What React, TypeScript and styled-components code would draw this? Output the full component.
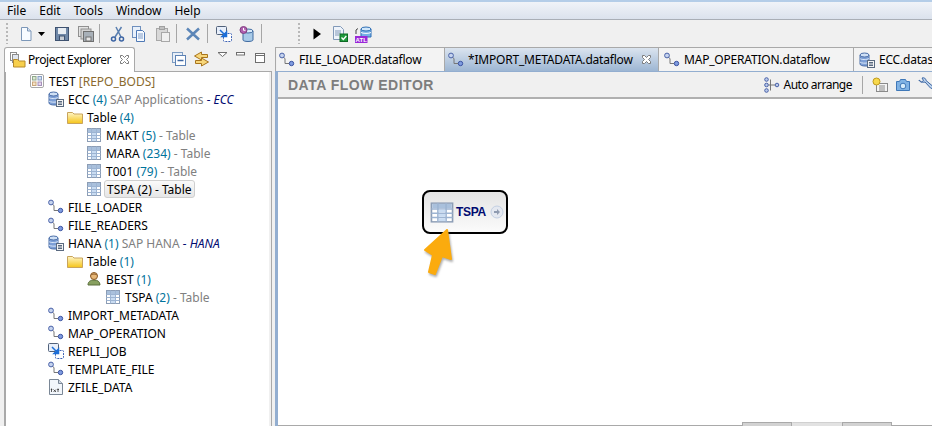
import React from "react";
import styled, { createGlobalStyle } from "styled-components";

const Global = createGlobalStyle`
  html, body { margin: 0; padding: 0; overflow: hidden; }
  body { background: #f0f0f0; font-family: "Noto Sans", "Liberation Sans", sans-serif; font-size: 12px; color: #000; }
  * { box-sizing: border-box; }
`;

const Shell = styled.div`
  width: 932px;
  height: 426px;
  display: flex;
  flex-direction: column;
  overflow: hidden;
  background: #f0f0f0;
  border-top: 2px solid #b4cde8;
`;

const MenuBar = styled.div`
  height: 18px;
  flex: none;
  display: flex;
  align-items: center;
  gap: 13px;
  padding: 1px 7px 0;
  background: linear-gradient(#f0f3f8, #dbe2ed);
  border-bottom: 1px solid #a9aeb6;
`;

const MenuItem = styled.span`
  font-size: 12px;
  line-height: 16px;
`;

const Toolbar = styled.div`
  height: 27px;
  flex: none;
  display: flex;
  align-items: center;
  padding-left: 6px;
`;

const Grip = styled.span`
  width: 2px;
  height: 21px;
  margin: 0 10px 0 0;
  background: repeating-linear-gradient(#b8b8b8 0 2px, transparent 2px 4px);
`;

const ToolIcon = styled.span<{ $w?: number; $after?: number }>`
  width: ${({ $w }) => $w ?? 16}px;
  height: 16px;
  margin-right: ${({ $after }) => $after ?? 6}px;
  display: inline-flex;
  flex: none;
`;

const ToolSep = styled.span<{ $after?: number }>`
  width: 1px;
  height: 19px;
  background: #a6a6a6;
  margin: 0 ${({ $after }) => $after ?? 9}px 0 1px;
`;

const Views = styled.div`
  flex: 1;
  min-height: 0;
  display: flex;
  padding-left: 4px;
`;

const Explorer = styled.section`
  width: 268px;
  flex: none;
  display: flex;
  flex-direction: column;
`;

const ExplorerHead = styled.div`
  height: 25px;
  flex: none;
  display: flex;
  align-items: flex-end;
  border-bottom: 1px solid #a9a9a9;
  position: relative;
`;

const ViewTab = styled.div`
  width: 131px;
  height: 25px;
  margin-bottom: -1px;
  display: flex;
  align-items: center;
  gap: 2px;
  padding: 0 6px 1px 5px;
  background: #fff;
  border: 1px solid #a9a9a9;
  border-bottom: none;
  border-radius: 3px 3px 0 0;
  position: relative;
  z-index: 1;
`;

const ViewLabel = styled.span`
  font-size: 12px;
  letter-spacing: -0.4px;
  margin-right: 6px;
  white-space: nowrap;
`;

const TabLabel = styled.span`
  font-size: 12px;
  letter-spacing: -0.2px;
  white-space: nowrap;
`;

const ViewTools = styled.div`
  flex: 1;
  height: 24px;
  display: flex;
  align-items: center;
  padding-left: 37px;
  gap: 7px;
`;

const TreePanel = styled.div`
  flex: 1;
  min-height: 0;
  border-left: 2px solid #a9a9a9;
  border-right: 1px solid #a9a9a9;
  background: #fff;
  box-shadow: inset -2px 0 #f0f0f0;
`;

const Row = styled.div<{ $depth: number }>`
  height: 18px;
  display: flex;
  align-items: center;
  gap: 4px;
  padding-left: ${({ $depth }) => 23 + $depth * 19}px;
  white-space: nowrap;
`;

const RowText = styled.span<{ $selected?: boolean }>`
  display: flex;
  align-items: center;
  gap: 4px;
  height: 18px;
  font-size: 12px;
  ${({ $selected }) =>
    $selected &&
    `background: linear-gradient(#fafafa, #e6e6e6);
     border: 1px solid #cfcfcf;
     border-radius: 3px;
     margin-left: -2px;
     padding: 0 2px 0 2px;`}
`;

const Label = styled.span`
  white-space: pre;
`;

const Count = styled.span<{ $plain?: boolean }>`
  color: ${({ $plain }) => ($plain ? "#000" : "#00739c")};
  white-space: pre;
`;

const Decor = styled.span<{ $plain?: boolean; $tan?: boolean }>`
  color: ${({ $plain, $tan }) => ($plain ? "#000" : $tan ? "#8a6a2e" : "#808080")};
  white-space: pre;
`;

const Alias = styled.span`
  color: #000a70;
  font-style: italic;
  white-space: pre;
`;

const EditorArea = styled.section`
  flex: 1;
  min-width: 0;
  margin-left: 3px;
  display: flex;
  flex-direction: column;
`;

const EditorTabs = styled.div`
  height: 24px;
  flex: none;
  display: flex;
  overflow: hidden;
  padding-left: 1px;
  border-top: 1px solid #a9a9a9;
  border-left: 1px solid #a9a9a9;
`;

const EditorTab = styled.div<{ $active?: boolean; $w: number; $pad: number }>`
  width: ${({ $w }) => $w}px;
  flex: none;
  display: flex;
  align-items: center;
  gap: 4px;
  padding: 0 6px 0 ${({ $pad }) => $pad}px;
  border-right: 1px solid #a9a9a9;
  background: ${({ $active }) => ($active ? "linear-gradient(#dbe4ef, #9db6d3)" : "#f3f3f3")};
`;

const TabClose = styled.span`
  display: flex;
  margin-left: auto;
`;

const EditorBody = styled.div`
  flex: 1;
  min-height: 0;
  display: flex;
  flex-direction: column;
  border-left: 3px solid #93aed0;
  border-top: 1px solid #93aed0;
`;

const EditorHeader = styled.div`
  height: 27px;
  flex: none;
  display: flex;
  align-items: center;
  padding-left: 10px;
  background: #f0f0f0;
  border-bottom: 2px solid #b0b0b0;
`;

const EditorTitle = styled.h1`
  flex: 1;
  margin: 0;
  font-family: "Liberation Sans", Arial, sans-serif;
  font-size: 14px;
  font-weight: 700;
  color: #7d7d7d;
  letter-spacing: 0.5px;
`;

const HeaderAction = styled.div`
  display: flex;
  align-items: center;
  gap: 4px;
  padding-right: 10px;
  border-right: 1px solid #a6a6a6;
  height: 18px;
  font-size: 12px;
  letter-spacing: -0.5px;
  white-space: nowrap;
`;

const HeaderIcons = styled.div`
  display: flex;
  align-items: center;
  gap: 7px;
  padding-left: 9px;
  margin-right: -2px;
`;

const Canvas = styled.div`
  flex: 1;
  min-height: 0;
  background: #fff;
  position: relative;
`;

const Node = styled.div`
  position: absolute;
  left: 144px;
  top: 91px;
  width: 86px;
  height: 44px;
  display: flex;
  align-items: center;
  gap: 1px;
  padding-left: 5px;
  border: 2px solid #000;
  border-radius: 8px;
  background: linear-gradient(#e4e4e4, #fbfbfb);
`;

const NodeName = styled.span`
  font-family: "Liberation Sans", Arial, sans-serif;
  font-size: 12px;
  font-weight: 700;
  letter-spacing: -0.3px;
  color: #000a70;
  margin-right: 3px;
`;

const Arrow = styled.svg`
  position: absolute;
  left: 142px;
  top: 126px;
  filter: drop-shadow(1px 2px 1px rgba(90, 90, 90, 0.5));
`;

const PaletteStrip = styled.div`
  position: absolute;
  left: 0;
  right: 0;
  bottom: 0;
  height: 4px;
  display: flex;
  justify-content: flex-end;
  padding-right: 40px;
  border-bottom: 1px solid #a9a9a9;
`;

const PaletteTab = styled.span<{ $active?: boolean }>`
  width: 50px;
  height: 4px;
  background: ${({ $active }) => ($active ? "#e2e2e2" : "#d2d2d2")};
  border-top: 1px solid ${({ $active }) => ($active ? "#d0d0d0" : "#a9a9a9")};
  border-left: 1px solid ${({ $active }) => ($active ? "transparent" : "#a9a9a9")};
  border-right: 1px solid ${({ $active }) => ($active ? "transparent" : "#a9a9a9")};
`;

/* icons */

const FlowIcon = () => (
  <svg width="16" height="16" viewBox="0 0 16 16" style={{ flex: "none" }}>
    <path d="M4 5l2 1.500v5h4" fill="none" stroke="#777" />
    <circle cx="3" cy="3.500" r="2.400" fill="#c5d3ee" stroke="#4a62a8" />
    <circle cx="12.500" cy="11.500" r="2.200" fill="#7f9ce0" stroke="#3a52a0" />
  </svg>
);

const TableIcon = ({ w = 16, h = 16 }: { w?: number; h?: number }) => (
  <svg width={w} height={h} viewBox="0 0 16 16" preserveAspectRatio="none" style={{ flex: "none" }}>
    <rect x="1.500" y="1.500" width="13" height="13" fill="#fff" stroke="#8c9db5" />
    <rect x="2" y="2" width="12" height="3" fill="#a9c0dc" />
    <path d="M1.500 5.500h13M1.500 8.500h13M1.500 11.500h13M5.500 1.500v13M10.500 1.500v13" stroke="#9db4d2" fill="none" />
    <rect x="6" y="6" width="4" height="2" fill="#c9dcf2" />
    <rect x="6" y="9" width="4" height="2" fill="#c9dcf2" />
    <rect x="6" y="12" width="4" height="2" fill="#c9dcf2" />
  </svg>
);

const FolderIcon = () => (
  <svg width="16" height="16" viewBox="0 0 16 16" style={{ flex: "none" }}>
    <defs>
      <linearGradient id="fld" x1="0" y1="0" x2="0" y2="1">
        <stop offset="0" stopColor="#fff6c8" />
        <stop offset="1" stopColor="#f5c418" />
      </linearGradient>
    </defs>
    <path d="M.5 3.500h5l1.500 1.500h8.500v9.500H.5z" fill="url(#fld)" stroke="#c9a45c" />
  </svg>
);

const DatastoreIcon = () => (
  <svg width="16" height="16" viewBox="0 0 16 16" style={{ flex: "none" }}>
    <path d="M1 3v9c0 1.300 2.400 2 5 2h4V3z" fill="#7d9fd6" stroke="#4b6ea8" />
    <ellipse cx="5.500" cy="3" rx="4.500" ry="2" fill="#cfe0f5" stroke="#4b6ea8" />
    <path d="M1 6.500c1 1.400 7 1.400 9 0M1 10c1 1.400 6 1.400 8 .8" fill="none" stroke="#dce8f8" />
    <rect x="8.500" y="8.500" width="7" height="7" fill="#f4f4f4" stroke="#5a6a80" />
    <path d="M10 10.500h4M10 12h4M10 13.500h4" stroke="#5a6a80" />
  </svg>
);

const GridBadgeIcon = () => (
  <svg width="16" height="16" viewBox="0 0 16 16" style={{ flex: "none" }}>
    <rect x="1.500" y="1.500" width="13" height="13" rx="1.500" fill="#fff" stroke="#a8a8a8" />
    <rect x="3.500" y="3.500" width="3.500" height="3.500" fill="#dbe8d4" stroke="#8fa98a" />
    <rect x="9" y="3.500" width="3.500" height="3.500" fill="#d4e0f2" stroke="#8aa0c4" />
    <rect x="3.500" y="9" width="3.500" height="3.500" fill="#f5e2c6" stroke="#c9a67a" />
    <rect x="9" y="9" width="3.500" height="3.500" fill="#e4d6ee" stroke="#a690ba" />
  </svg>
);

const JobIcon = () => (
  <svg width="16" height="16" viewBox="0 0 16 16" style={{ flex: "none" }}>
    <rect x=".5" y=".5" width="10" height="8" rx="1" fill="#e8effa" stroke="#51617a" />
    <rect x="7.500" y="7.500" width="8" height="8" rx="1" fill="#fff" stroke="#3f63b5" strokeDasharray="2 1" />
    <path d="M4 4l6 6M10.500 6v4.500h-4.500z" fill="#1d6fd8" stroke="#1d6fd8" strokeWidth="1.500" />
  </svg>
);

const TxtIcon = () => (
  <svg width="16" height="16" viewBox="0 0 16 16" style={{ flex: "none" }}>
    <path d="M1.500.5h9l4 4v11h-13z" fill="#f2f6fb" stroke="#7a8796" />
    <path d="M10.500.5v4h4" fill="#cfd8e3" stroke="#7a8796" />
    <path d="M3.500 9.500v3.500M2.800 10.500h1.500M5.500 10.500l2.500 2.500M8 10.500l-2.500 2.500M10 9.500v3.500M9.300 10.500h1.700" stroke="#333" fill="none" strokeWidth=".8" />
  </svg>
);

const UserIcon = () => (
  <svg width="16" height="16" viewBox="0 0 16 16" style={{ flex: "none" }}>
    <path d="M2 14c0-3.500 2.500-5 6-5s6 1.500 6 5z" fill="#88a060" stroke="#5a6e3c" />
    <circle cx="8" cy="5" r="3.500" fill="#e8b878" stroke="#8a5a28" />
    <path d="M4.700 4.500C5 1.800 11 1.800 11.300 4.500 9.500 3 6.500 3 4.700 4.500z" fill="#8a5a28" />
  </svg>
);

const PerspectiveIcon = () => (
  <svg width="16" height="16" viewBox="0 0 16 16" style={{ flex: "none" }}>
    <rect x=".5" y=".5" width="6" height="8" fill="#fff" stroke="#8c8c8c" />
    <rect x="2.500" y="2.500" width="6" height="8" fill="#e0e6ef" stroke="#8c8c8c" />
    <path d="M3.500 7.500h4l1.500 1.500h6v6h-11.500z" fill="#f7cf4c" stroke="#b78a2a" />
  </svg>
);

const CloseX = () => (
  <svg width="11" height="11" viewBox="0 0 11 11" style={{ flex: "none" }}>
    <path d="M1.500 1.500h2l2 2 2-2h2v2l-2 2 2 2v2h-2l-2-2-2 2h-2v-2l2-2-2-2z" fill="#fff" stroke="#7b7b7b" />
  </svg>
);

const NewFileIcon = () => (
  <svg width="16" height="16" viewBox="0 0 16 16">
    <path d="M3.500 1.500h6l3.500 3.500v9.500h-9.500z" fill="#f7fbff" stroke="#7c97b8" />
    <path d="M9.500 1.500v3.500h3.500" fill="#d8e4f2" stroke="#7c97b8" />
  </svg>
);

const SaveIcon = () => (
  <svg width="16" height="16" viewBox="0 0 16 16">
    <rect x="1.500" y="1.500" width="13" height="13" fill="#6f88a8" stroke="#3f5270" />
    <rect x="4" y="2" width="8" height="6" fill="#e8edf3" />
    <rect x="5.500" y="10" width="5" height="4.500" fill="#c8ced6" stroke="#3f5270" />
  </svg>
);

const SaveAllIcon = () => (
  <svg width="18" height="16" viewBox="0 0 18 16">
    <rect x=".5" y=".5" width="10" height="10" fill="#e4e4e4" stroke="#909090" />
    <rect x="3" y="3" width="10" height="10" fill="#d4d4d4" stroke="#909090" />
    <rect x="5.500" y="5.500" width="10" height="10" fill="#a8b0b8" stroke="#707070" />
    <rect x="8" y="11" width="5" height="4" fill="#e6e6e6" stroke="#707070" />
  </svg>
);

const CutIcon = () => (
  <svg width="16" height="16" viewBox="0 0 16 16">
    <path d="M12.500 1L6 11M7 1l5 10" fill="none" stroke="#5a7fb0" strokeWidth="1.500" />
    <circle cx="4.500" cy="13" r="2" fill="none" stroke="#3c64a4" strokeWidth="1.500" />
    <circle cx="12.500" cy="13" r="2" fill="none" stroke="#3c64a4" strokeWidth="1.500" />
  </svg>
);

const CopyIcon = () => (
  <svg width="16" height="16" viewBox="0 0 16 16">
    <rect x="1.500" y=".5" width="8" height="11" fill="#e8f0fa" stroke="#6e8fbd" />
    <path d="M5.500 4.500h6l2 2v9h-8z" fill="#f6faff" stroke="#4f79b5" />
    <path d="M7 8h5M7 10h5M7 12h5" stroke="#7f9cc7" />
  </svg>
);

const PasteIcon = () => (
  <svg width="16" height="16" viewBox="0 0 16 16">
    <rect x="1.500" y="2.500" width="11" height="12" fill="#d8d8d8" stroke="#a8a8a8" />
    <rect x="4.500" y=".5" width="5" height="3" fill="#c0c0c0" stroke="#a0a0a0" />
    <rect x="6.500" y="6.500" width="8" height="9" fill="#f0f0f0" stroke="#a8a8a8" />
  </svg>
);

const DeleteIcon = () => (
  <svg width="16" height="16" viewBox="0 0 16 16">
    <path d="M2 2.500l12 11M14 2.500l-12 11" stroke="#5c86b8" strokeWidth="2.500" fill="none" />
  </svg>
);

const ClockStoreIcon = () => (
  <svg width="16" height="16" viewBox="0 0 16 16">
    <path d="M4 5v9c0 .8 2 1.500 5 1.500s5-.7 5-1.500V5z" fill="#a9cbe8" stroke="#3f6aa0" />
    <ellipse cx="9" cy="5" rx="5" ry="2" fill="#d8eafa" stroke="#3f6aa0" />
    <circle cx="4.500" cy="4" r="3.500" fill="#b060b0" stroke="#804080" />
    <path d="M4.500 2v2.300h2" stroke="#fff" fill="none" />
  </svg>
);

const RunIcon = () => (
  <svg width="16" height="16" viewBox="0 0 16 16">
    <path d="M3.500 2.500l7.500 5.500-7.500 5.500z" fill="#000" />
  </svg>
);

const ValidateIcon = () => (
  <svg width="16" height="16" viewBox="0 0 16 16">
    <path d="M1.500.5h7l3 3v10h-10z" fill="#eef3fa" stroke="#8199b8" />
    <path d="M3 5h6M3 7h6M3 9h4" stroke="#8199b8" />
    <rect x="8" y="8" width="7.500" height="7.500" fill="#1f9a3c" stroke="#0e6a24" />
    <path d="M9.500 11.500l1.800 2 3-3.500" stroke="#fff" fill="none" strokeWidth="1.300" />
  </svg>
);

const AtlIcon = () => (
  <svg width="17" height="17" viewBox="0 0 17 17">
    <path d="M6 3v8h10V3z" fill="#76b0e6" stroke="#2f6fb5" />
    <ellipse cx="11" cy="3" rx="5" ry="2" fill="#cfe6fa" stroke="#2f6fb5" />
    <path d="M6 6.500c2 1.200 8 1.200 10 0" stroke="#fff" fill="none" />
    <rect x="0" y="10" width="12.500" height="7" fill="#9a28d8" />
    <path d="M1 8V4l2-1.500" stroke="#444" fill="none" />
    <text x="0.600" y="16" fontFamily="Liberation Sans" fontSize="6" fontWeight="700" fill="#fff">ATL</text>
  </svg>
);

const CollapseIcon = () => (
  <svg width="14" height="14" viewBox="0 0 14 14">
    <rect x=".5" y=".5" width="10" height="10" fill="#e8eff8" stroke="#7d9cc2" />
    <rect x="3.500" y="3.500" width="10" height="10" fill="#fff" stroke="#5d82b4" />
    <path d="M5.500 8.500h6" stroke="#3f68a4" strokeWidth="1.500" />
  </svg>
);

const LinkIcon = () => (
  <svg width="17" height="16" viewBox="0 0 17 16">
    <path d="M8.500 1L1.500 5l7 4V6.500h6v-3h-6zM8.500 7v2.500h-6v3h6V15l7-4z" fill="#f7d67a" stroke="#a8741c" />
  </svg>
);

const ViewMenuIcon = () => (
  <svg width="11" height="16" viewBox="0 0 11 16" style={{ marginBottom: 6 }}>
    <path d="M1 4.500h9l-4.500 4z" fill="#fff" stroke="#6e6e6e" />
  </svg>
);

const MinimizeIcon = () => (
  <svg width="12" height="16" viewBox="0 0 12 16" style={{ marginBottom: 4 }}>
    <rect x="1.500" y="3.500" width="8" height="2.500" fill="#fff" stroke="#6e6e6e" />
  </svg>
);

const MaximizeIcon = () => (
  <svg width="12" height="16" viewBox="0 0 12 16">
    <rect x="1.500" y="2.500" width="9" height="9" fill="#fff" stroke="#6e6e6e" />
    <path d="M1.500 4.500h9" stroke="#6e6e6e" />
  </svg>
);

const AutoArrangeIcon = () => (
  <svg width="16" height="16" viewBox="0 0 16 16" style={{ flex: "none" }}>
    <circle cx="2.500" cy="2.500" r="1.800" fill="#b9c9ea" stroke="#4a62a8" />
    <circle cx="2.500" cy="8" r="1.800" fill="#b9c9ea" stroke="#4a62a8" />
    <circle cx="2.500" cy="13.500" r="1.800" fill="#b9c9ea" stroke="#4a62a8" />
    <circle cx="13" cy="8" r="1.800" fill="#b9c9ea" stroke="#4a62a8" />
    <path d="M6.500 2.500v11M4.500 8h6.500" stroke="#777" fill="none" />
  </svg>
);

const HintIcon = () => (
  <svg width="16" height="16" viewBox="0 0 16 16" style={{ flex: "none" }}>
    <rect x="4.500" y="6.500" width="11" height="8" fill="#f4f4f4" stroke="#8a8a8a" />
    <path d="M7 9h6M7 11h6M7 13h6" stroke="#8a8a8a" />
    <circle cx="4.500" cy="4.500" r="3.500" fill="#f7d84c" stroke="#c09a1c" />
  </svg>
);

const CameraIcon = () => (
  <svg width="16" height="16" viewBox="0 0 16 16" style={{ flex: "none" }}>
    <path d="M1.500 4.500h3l1-2h5l1 2h3v9h-13z" fill="#7fb2e4" stroke="#3f78b8" />
    <circle cx="8" cy="9" r="2.800" fill="#d6ecfb" stroke="#3f78b8" />
  </svg>
);

const WrenchIcon = () => (
  <svg width="16" height="16" viewBox="0 0 16 16" style={{ flex: "none" }}>
    <path d="M1 3l2.500 2 2-1.500L4 1c2-.8 4 .5 4 2.500L14.500 9l1 3-3-1L7 5c-3 .8-6-.5-6-2z" fill="#bcd2ec" stroke="#3f68a4" />
  </svg>
);

const GoIcon = () => (
  <svg width="14" height="14" viewBox="0 0 14 14" style={{ flex: "none" }}>
    <circle cx="7" cy="7" r="6" fill="#e4e8f0" stroke="#c3cfe2" />
    <path d="M4 6h3V4l3 3-3 3V8H4z" fill="#8f9bb0" />
  </svg>
);

type TreeRow = {
  depth: number;
  icon: React.ReactNode;
  name: string;
  count?: string;
  kind?: string;
  tanKind?: boolean;
  alias?: string;
  selected?: boolean;
};

const rows: TreeRow[] = [
  { depth: 0, icon: <GridBadgeIcon />, name: "TEST", kind: " [REPO_BODS]", tanKind: true },
  { depth: 1, icon: <DatastoreIcon />, name: "ECC", count: " (4)", kind: " SAP Applications", alias: " - ECC" },
  { depth: 2, icon: <FolderIcon />, name: "Table", count: " (4)" },
  { depth: 3, icon: <TableIcon />, name: "MAKT", count: " (5)", kind: " - Table" },
  { depth: 3, icon: <TableIcon />, name: "MARA", count: " (234)", kind: " - Table" },
  { depth: 3, icon: <TableIcon />, name: "T001", count: " (79)", kind: " - Table" },
  { depth: 3, icon: <TableIcon />, name: "TSPA", count: " (2)", kind: " - Table", selected: true },
  { depth: 1, icon: <FlowIcon />, name: "FILE_LOADER" },
  { depth: 1, icon: <FlowIcon />, name: "FILE_READERS" },
  { depth: 1, icon: <DatastoreIcon />, name: "HANA", count: " (1)", kind: " SAP HANA", alias: " - HANA" },
  { depth: 2, icon: <FolderIcon />, name: "Table", count: " (1)" },
  { depth: 3, icon: <UserIcon />, name: "BEST", count: " (1)" },
  { depth: 4, icon: <TableIcon />, name: "TSPA", count: " (2)", kind: " - Table" },
  { depth: 1, icon: <FlowIcon />, name: "IMPORT_METADATA" },
  { depth: 1, icon: <FlowIcon />, name: "MAP_OPERATION" },
  { depth: 1, icon: <JobIcon />, name: "REPLI_JOB" },
  { depth: 1, icon: <FlowIcon />, name: "TEMPLATE_FILE" },
  { depth: 1, icon: <TxtIcon />, name: "ZFILE_DATA" },
];

const tabs = [
  { name: "FILE_LOADER.dataflow", w: 168, pad: 2, icon: <FlowIcon /> },
  { name: "*IMPORT_METADATA.dataflow", w: 214, pad: 3, icon: <FlowIcon />, active: true },
  { name: "MAP_OPERATION.dataflow", w: 195, pad: 5, icon: <FlowIcon /> },
  { name: "ECC.datastore", w: 100, pad: 5, icon: <DatastoreIcon /> },
];

export default function App() {
  return (
    <Shell>
      <Global />
      <MenuBar>
        {["File", "Edit", "Tools", "Window", "Help"].map((m) => (
          <MenuItem key={m}>{m}</MenuItem>
        ))}
      </MenuBar>
      <Toolbar>
        <Grip />
        <ToolIcon $w={17} $after={2}><NewFileIcon /></ToolIcon>
        <ToolIcon $w={9} $after={8}>
          <svg width="9" height="16" viewBox="0 0 9 16"><path d="M1 6h7L4.500 10z" fill="#000" /></svg>
        </ToolIcon>
        <ToolIcon $after={8}><SaveIcon /></ToolIcon>
        <ToolIcon $w={18} $after={2}><SaveAllIcon /></ToolIcon>
        <ToolSep />
        <ToolIcon><CutIcon /></ToolIcon>
        <ToolIcon $after={8}><CopyIcon /></ToolIcon>
        <ToolIcon $after={4}><PasteIcon /></ToolIcon>
        <ToolSep $after={8} />
        <ToolIcon $after={5}><DeleteIcon /></ToolIcon>
        <ToolSep $after={8} />
        <ToolIcon $after={7}><JobIcon /></ToolIcon>
        <ToolIcon $after={5}><ClockStoreIcon /></ToolIcon>
        <ToolSep $after={36} />
        <Grip />
        <ToolIcon><RunIcon /></ToolIcon>
        <ToolIcon $after={7}><ValidateIcon /></ToolIcon>
        <ToolIcon $w={17}><AtlIcon /></ToolIcon>
      </Toolbar>
      <Views>
        <Explorer>
          <ExplorerHead>
            <ViewTab>
              <PerspectiveIcon />
              <ViewLabel>Project Explorer</ViewLabel>
              <CloseX />
            </ViewTab>
            <ViewTools>
              <CollapseIcon />
              <LinkIcon />
              <ViewMenuIcon />
              <MinimizeIcon />
              <MaximizeIcon />
            </ViewTools>
          </ExplorerHead>
          <TreePanel>
            {rows.map((r, i) => (
              <Row key={i} $depth={r.depth}>
                {r.icon}
                <RowText $selected={r.selected}>
                  <span>
                    <Label>{r.name}</Label>
                    {r.count && <Count $plain={r.selected}>{r.count}</Count>}
                    {r.kind && <Decor $plain={r.selected} $tan={r.tanKind}>{r.kind}</Decor>}
                    {r.alias && <Alias>{r.alias}</Alias>}
                  </span>
                </RowText>
              </Row>
            ))}
          </TreePanel>
        </Explorer>
        <EditorArea>
          <EditorTabs>
            {tabs.map((t) => (
              <EditorTab key={t.name} $w={t.w} $pad={t.pad} $active={t.active}>
                {t.icon}
                <TabLabel>{t.name}</TabLabel>
                {t.active && <TabClose><CloseX /></TabClose>}
              </EditorTab>
            ))}
          </EditorTabs>
          <EditorBody>
            <EditorHeader>
              <EditorTitle>DATA FLOW EDITOR</EditorTitle>
              <HeaderAction>
                <AutoArrangeIcon />
                Auto arrange
              </HeaderAction>
              <HeaderIcons>
                <HintIcon />
                <CameraIcon />
                <WrenchIcon />
              </HeaderIcons>
            </EditorHeader>
            <Canvas>
              <Node>
                <TableIcon w={26} h={23} />
                <NodeName>TSPA</NodeName>
                <GoIcon />
              </Node>
              <Arrow width="36" height="54" viewBox="0 0 36 54">
                <path d="M27 5L31 34 22 31 15 49 9 47 13 30 5 25z" fill="#fbab0e" stroke="#fbab0e" strokeWidth="2" strokeLinejoin="round" />
              </Arrow>
              <PaletteStrip>
                <PaletteTab />
                <PaletteTab $active />
                <PaletteTab />
              </PaletteStrip>
            </Canvas>
          </EditorBody>
        </EditorArea>
      </Views>
    </Shell>
  );
}
